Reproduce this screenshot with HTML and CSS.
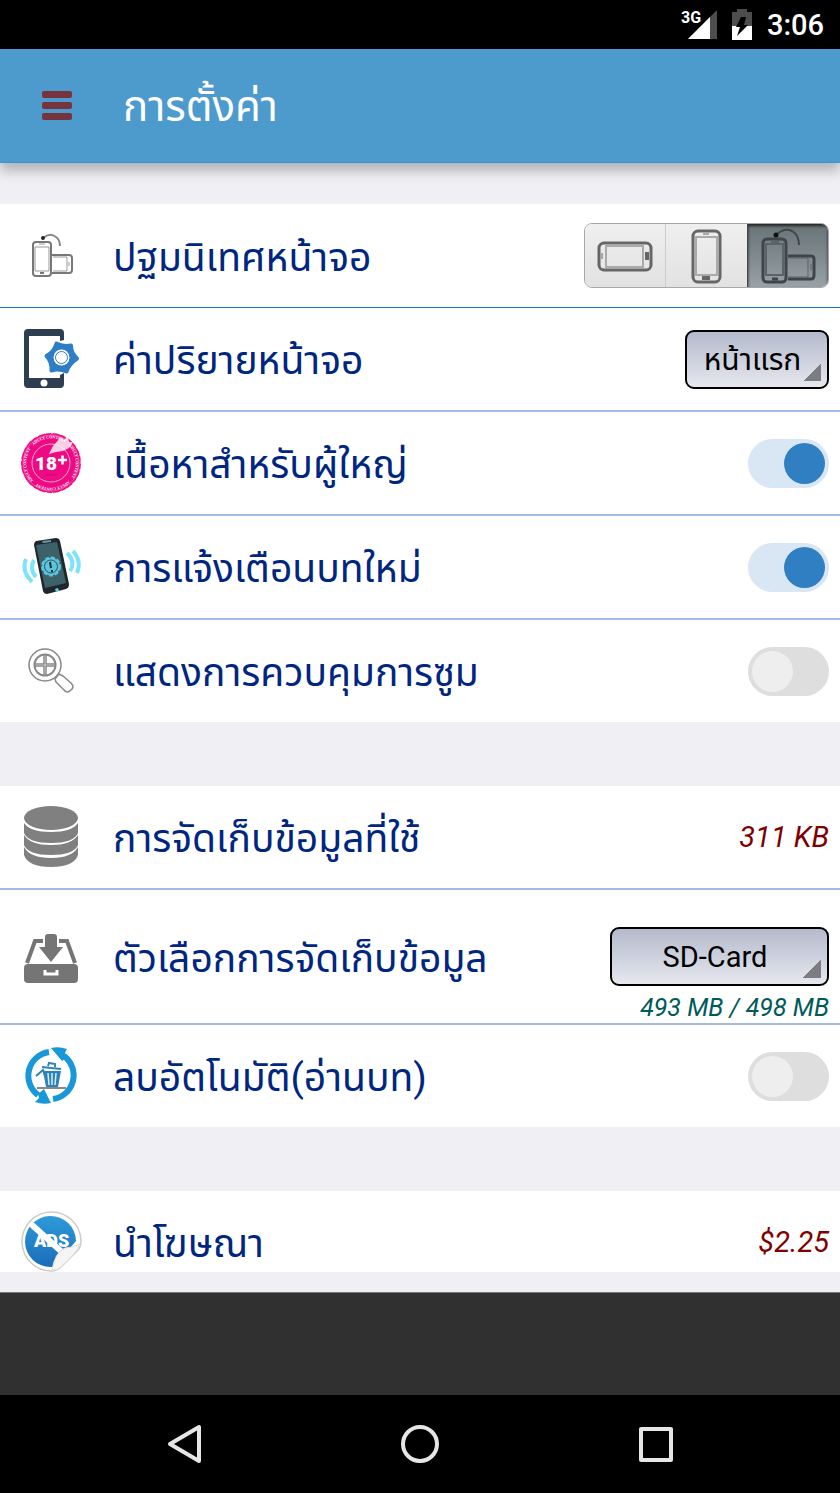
FILE: index.html
```html
<!DOCTYPE html>
<html lang="th">
<head>
    <meta charset="UTF-8">
    <meta name="viewport" content="width=device-width, initial-scale=1.0">
    <title>การตั้งค่า</title>
    <link rel="stylesheet" href="styles.css">
</head>
<body>
    <div class="status-bar">
        <svg class="signal" width="36" height="30" viewBox="0 0 36 30">
            <path d="M36 0v29H7z" fill="#4d4d4d"/>
            <path d="M29 7v22H7z" fill="#fff"/>
            <text x="0" y="13" class="network">3G</text>
        </svg>
        <svg width="20" height="31" viewBox="0 0 20 31">
            <path d="M5 0h10v3h5v14H0V3h5z" fill="#4d4d4d"/>
            <path d="M0 17h20v14H0z" fill="#fff"/>
            <path d="M9 8h5l-2 8h4L5 27l3-9H4z" fill="#000"/>
        </svg>
        <span class="time">3:06</span>
    </div>

    <header class="app-bar">
        <button class="menu" aria-label="เมนู"><span></span><span></span><span></span></button>
        <h1>การตั้งค่า</h1>
    </header>

    <main class="settings">
        <section class="group">
            <div class="row row-first">
                <svg class="icon" viewBox="0 0 62 62" fill="none" stroke="#777">
                    <rect x="13" y="17" width="18" height="34" rx="3" stroke-width="2"/>
                    <path d="M15 22h14v24H15zM19 19h6" stroke="#999"/>
                    <path d="M20 48h4" stroke-width="2"/>
                    <path d="M32 30h17q3 0 3 3v12q0 3-3 3H32" stroke-width="2"/>
                    <path d="M33 32h14v14H33M49 37v4" stroke="#999"/>
                    <path d="M23 13q7-6 13-1 4 3 4 9" stroke="#888" stroke-width="2"/>
                    <circle cx="23" cy="13" r="2" fill="#222" stroke="none"/>
                </svg>
                <span class="label">ปฐมนิเทศหน้าจอ</span>
                <div class="segmented" role="radiogroup" aria-label="ปฐมนิเทศหน้าจอ">
                    <label class="segment">
                        <input type="radio" name="orientation" aria-label="แนวนอน">
                        <svg viewBox="0 0 62 62" fill="none" stroke="#666">
                            <rect x="5" y="18" width="52" height="27" rx="5" stroke-width="3"/>
                            <path d="M12 20v23M49 20v23M12 21h37M12 42h37" stroke="#aaa" stroke-width="2"/>
                            <path d="M53 27v8" stroke-width="4"/>
                            <path d="M8 28v6"/>
                        </svg>
                    </label>
                    <label class="segment">
                        <input type="radio" name="orientation" aria-label="แนวตั้ง">
                        <svg viewBox="0 0 62 62" fill="none" stroke="#666">
                            <rect x="18" y="6" width="27" height="51" rx="5" stroke-width="3"/>
                            <path d="M20 12h23M20 50h23M21 12v38M42 12v38" stroke="#aaa" stroke-width="2"/>
                            <path d="M27 53h8" stroke-width="4"/>
                            <path d="M28 9h6"/>
                        </svg>
                    </label>
                    <label class="segment">
                        <input type="radio" name="orientation" aria-label="อัตโนมัติ" checked>
                        <svg viewBox="0 0 62 62" fill="none" stroke="#3f4548">
                            <rect x="6" y="14" width="23" height="43" rx="4" stroke-width="3"/>
                            <path d="M9 19h17v31H9zM14 17h8" stroke="#5b6367" stroke-width="2"/>
                            <path d="M15 54h6" stroke-width="3"/>
                            <path d="M31 31h23q3 0 3 3v16q0 4-3 4H31" stroke-width="3"/>
                            <path d="M31 33h20v19H31M54 39v6" stroke="#5b6367"/>
                            <path d="M19 10Q27 2 35 6q7 4 7 14" stroke-width="2"/>
                            <circle cx="19" cy="10" r="2.5" fill="#111" stroke="none"/>
                        </svg>
                    </label>
                </div>
            </div>

            <div class="row">
                <svg class="icon" viewBox="0 0 62 62">
                    <path d="M8 1h32q4 0 4 4v7l-4 1V8H9v42h31v-3l4-2v11q0 4-4 4H8q-4 0-4-4V5q0-4 4-4z" fill="#2c3e50"/>
                    <circle cx="24" cy="55" r="3.5" fill="#fff"/>
                    <path d="M36.500 15.500Q44 19 51 17.500 51 25 57 30.500 49 36 46.500 43.500 39 40 31.500 42.500 32 34 26.500 28 34 24 36.500 15.500z" fill="#2f7dc4" stroke="#2f7dc4" stroke-width="4" stroke-linejoin="round"/>
                    <circle cx="41.500" cy="29.500" r="8" fill="#fff"/>
                    <circle cx="41.500" cy="29.500" r="6" fill="none" stroke="#2f7dc4"/>
                </svg>
                <label class="label" for="default-page">ค่าปริยายหน้าจอ</label>
                <select class="picker" id="default-page">
                    <option>หน้าแรก</option>
                </select>
            </div>

            <div class="row">
                <svg class="icon" viewBox="0 0 62 62">
                    <circle cx="31" cy="31" r="30" fill="#ee0a83"/>
                    <circle cx="31" cy="31" r="30" fill="none" stroke="#fff" stroke-dasharray="1 5 2 7"/>
                    <circle cx="31" cy="31" r="28" fill="none" stroke="#f792c6" stroke-width="0.5"/>
                    <circle cx="31" cy="31" r="19" fill="none" stroke="#f9a8d2"/>
                    <path id="ring" d="M13.500 13.500A24.700 24.700 0 0 1 48.500 13.500" fill="none"/>
                    <g class="ring-text">
                        <text><textPath href="#ring">ADULT CONTENT</textPath></text>
                        <text transform="rotate(90 31 31)"><textPath href="#ring">ADULT CONTENT</textPath></text>
                        <text transform="rotate(180 31 31)"><textPath href="#ring">ADULT CONTENT</textPath></text>
                        <text transform="rotate(270 31 31)"><textPath href="#ring">ADULT CONTENT</textPath></text>
                    </g>
                    <path d="M29 22l4-8 8-9 3 3 4-4 1 6 4 0-4 6-6 3-7 1z" fill="#fff" opacity="0.8"/>
                    <text x="15" y="38" class="age">18</text>
                    <path d="M38 28h9M42.500 23.500v9" stroke="#fff" stroke-width="2.500"/>
                    <path d="M25 43h12" stroke="#c9076d"/>
                </svg>
                <label class="label" for="adult">เนื้อหาสำหรับผู้ใหญ่</label>
                <input class="switch" type="checkbox" id="adult" checked>
            </div>

            <div class="row">
                <svg class="icon" viewBox="0 0 62 62">
                    <path d="M16 5l20-3q3 0 4 3l9 43q0 4-3 5l-19 5q-3 0-4-3L14 9q0-3 2-4z" fill="#20272b"/>
                    <path d="M16 9l21-3 9 41-21 5z" fill="#3d6168"/>
                    <path d="M22 5l9-1v2l-8 1z" fill="#6a9aa6"/>
                    <path d="M35 53l3-1 1 3-3 1z" fill="#63cdec"/>
                    <circle cx="31" cy="30.500" r="9" fill="#5bc5df" stroke="#5bc5df" stroke-width="2" stroke-dasharray="4 2"/>
                    <circle cx="31" cy="30.500" r="6.500" fill="none" stroke="#31525a"/>
                    <path d="M30 26l1 6M32 34v2" stroke="#182f35" stroke-width="2"/>
                    <g fill="none" stroke="#7de4f7" stroke-width="4">
                        <path d="M6 23q-5 12 6 23M14 24q-5 9 2 17M47 17q9 9 3 18M53 15q9 10 4 22"/>
                    </g>
                </svg>
                <label class="label" for="notify">การแจ้งเตือนบทใหม่</label>
                <input class="switch" type="checkbox" id="notify" checked>
            </div>

            <div class="row">
                <svg class="icon" viewBox="0 0 62 62" fill="none" stroke="#888" stroke-width="1.500">
                    <circle cx="25" cy="25" r="16"/>
                    <circle cx="25" cy="25" r="10.500" stroke-width="2"/>
                    <path d="M24 15v9h-9M26 15v9h9M24 35v-9h-9M26 35v-9h9"/>
                    <path d="M35 39l4-5 4 2 8 7q4 4 0 7-4 4-7 0l-8-8z" fill="#fff" stroke-linejoin="round"/>
                </svg>
                <label class="label" for="zoom">แสดงการควบคุมการซูม</label>
                <input class="switch" type="checkbox" id="zoom">
            </div>
        </section>

        <section class="group">
            <div class="row">
                <svg class="icon" viewBox="0 0 62 62" fill="#808080">
                    <ellipse cx="31" cy="12" rx="27" ry="12"/>
                    <path d="M4 17q6 9 27 9t27-9v10q-4 10-27 10T4 27z"/>
                    <path d="M4 29q6 10 27 10t27-10v10q-4 10-27 10T4 39z"/>
                    <path d="M4 41q6 11 27 11t27-11v8q-4 12-27 12T4 49z"/>
                </svg>
                <span class="label">การจัดเก็บข้อมูลที่ใช้</span>
                <span class="value">311 KB</span>
            </div>

            <div class="row row-tall">
                <svg class="icon" viewBox="0 0 62 62" fill="#757575">
                    <rect x="4" y="38" width="54" height="19" rx="4"/>
                    <path d="M25 44v4h12v-4" fill="none" stroke="#fff" stroke-width="3"/>
                    <path d="M25 11q0-3 3-3h6q3 0 3 3v10h6L31 36 19 21h6z"/>
                    <path d="M7 37l8-22h8M55 37l-8-22h-8" fill="none" stroke="#757575" stroke-width="4"/>
                </svg>
                <label class="label" for="storage">ตัวเลือกการจัดเก็บข้อมูล</label>
                <div class="storage">
                    <select class="picker picker-wide" id="storage">
                        <option>SD-Card</option>
                    </select>
                    <span class="usage">493 MB / 498 MB</span>
                </div>
            </div>

            <div class="row">
                <svg class="icon" viewBox="0 0 62 62">
                    <g fill="none" stroke="#1898d8" stroke-width="6">
                        <path d="M29 7A24 24 0 0 0 18 50"/>
                        <path d="M44 11A24 24 0 0 1 33 54"/>
                    </g>
                    <path d="M31 3q8-2 16 1l-2 4 2 4-5 4zM15 57l4-4-1-4 6-5 7 14q-8 2-16-1z" fill="#1898d8"/>
                    <path d="M17 43h29" stroke="#888" stroke-width="2"/>
                    <path d="M23 26h18l-3 16H26z" fill="#2d83b8"/>
                    <path d="M28 28l1 12M32 28v12M36 28l-1 12" stroke="#d9eefa" stroke-width="1.500"/>
                    <path d="M22 22l19 2M28 21l1-3 6 1v3M16 31l7-6 2 6" fill="none" stroke="#2d83b8" stroke-width="2"/>
                </svg>
                <label class="label" for="auto-delete">ลบอัตโนมัติ(อ่านบท)</label>
                <input class="switch" type="checkbox" id="auto-delete">
            </div>
        </section>

        <section class="group">
            <div class="row row-last">
                <svg class="icon" viewBox="0 0 62 62">
                    <defs>
                        <linearGradient id="sticker" x2="0" y2="1">
                            <stop stop-color="#2e9bd8"/>
                            <stop offset="1" stop-color="#1a6cba"/>
                        </linearGradient>
                    </defs>
                    <path d="M32 60A29.500 29.500 0 1 1 61 30q0 5-2 8L40 57q-4 3-8 3z" fill="#fff" stroke="#ccc" stroke-width="1.500"/>
                    <path d="M31 56A25.500 25.500 0 1 1 56 30L34 56z" fill="url(#sticker)"/>
                    <text x="14" y="36" class="ads">ADS</text>
                    <path d="M11 13l32 29" stroke="#fff" stroke-width="6"/>
                    <path d="M32 59q3-18 13-22 6 0 15-4-2 6-8 12L41 56q-4 4-9 3z" fill="#f5f5f5" stroke="#ddd"/>
                </svg>
                <span class="label">นำโฆษณา</span>
                <span class="value">$2.25</span>
            </div>
        </section>
    </main>

    <div class="ad-space"></div>

    <nav class="nav-bar">
        <button aria-label="กลับ">
            <svg viewBox="0 0 44 44"><path d="M37 5v34L8 22z"/></svg>
        </button>
        <button aria-label="หน้าหลัก">
            <svg viewBox="0 0 44 44"><circle cx="22" cy="22" r="17"/></svg>
        </button>
        <button aria-label="ล่าสุด">
            <svg viewBox="0 0 44 44"><rect x="7" y="7" width="30" height="31"/></svg>
        </button>
    </nav>
</body>
</html>
```
FILE: styles.css
```css
* {
    box-sizing: border-box;
}

body {
    font-family: Roboto, "Noto Sans Thai", "Noto Sans", sans-serif;
    display: flex;
    flex-direction: column;
    min-height: 100vh;
    margin: 0;
    background-color: #000;
}

button {
    border: none;
    background: none;
    padding: 0;
    cursor: pointer;
}

/* top bars */
.status-bar {
    display: flex;
    justify-content: flex-end;
    align-items: center;
    gap: 15px;
    height: 49px;
    padding: 0 16px;
    background-color: #000;
    color: #fff;
}

.network {
    font-size: 16px;
    font-weight: bold;
    fill: #fff;
}

.signal {
    overflow: visible;
}

.time {
    font-size: 29px;
    font-weight: 500;
}

.app-bar {
    display: flex;
    align-items: center;
    gap: 51px;
    height: 114px;
    padding: 0 42px;
    background-color: #4d9acd;
    border-bottom: 1px solid #2f96d3;
    box-shadow: 0 8px 12px rgba(0, 0, 0, 0.25);
    z-index: 1;
}

.menu {
    display: flex;
    flex-direction: column;
    gap: 4px;
    width: 30px;
}

.menu span {
    height: 7px;
    border-radius: 2px;
    background-color: #76343f;
}

.app-bar h1 {
    margin: 0;
    padding-top: 4px;
    font-size: 42px;
    font-weight: normal;
    color: #fff;
}

/* settings list */
.settings {
    display: flex;
    flex-direction: column;
    gap: 64px;
    padding: 41px 0 20px;
    background-color: #efeff4;
}

.group {
    background-color: #fff;
}

.row {
    display: flex;
    align-items: center;
    height: 104px;
    padding: 0 11px 0 20px;
    border-bottom: 2px solid #a3bde0;
}

.row-first {
    height: 104px;
    border-bottom: 1px solid #1a72b0;
}

.row:last-child {
    border-bottom: none;
    height: 102px;
}

.row-tall {
    height: 135px;
}

.row.row-last {
    height: 81px;
    padding-top: 20px;
}

.icon {
    flex: none;
    width: 62px;
    height: 62px;
    margin-right: 31px;
}

.label {
    flex: 1;
    padding-top: 4px;
    font-size: 39px;
    line-height: 48px;
    color: #00267f;
}

.value {
    font-size: 29px;
    font-style: italic;
    color: #7f0000;
}

.age {
    font-size: 19px;
    font-weight: 900;
    fill: #fff;
}

.ring-text {
    font-family: "Liberation Serif", serif;
    font-size: 4px;
    font-weight: bold;
    fill: #fff;
}

.ads {
    font-size: 18px;
    font-weight: 900;
    fill: #fff;
}

/* orientation buttons */
.segmented {
    display: flex;
    width: 245px;
    height: 65px;
    border: 1px solid #a8a8a8;
    border-radius: 8px;
    overflow: hidden;
}

.segment {
    position: relative;
    flex: 1;
    display: flex;
    justify-content: center;
    align-items: center;
    background: linear-gradient(#efefef, #e2e2e2);
    cursor: pointer;
}

.segment + .segment {
    border-left: 1px solid #ccc;
}

.segment input {
    position: absolute;
    opacity: 0;
}

.segment svg {
    width: 62px;
    height: 62px;
}

.segment:has(input:checked) {
    background: linear-gradient(#687378, #838d92 60%, #98a2a7);
    border-left-color: #42484b;
    box-shadow: inset 0 2px 3px #222;
}

/* drop-downs */
.picker {
    appearance: none;
    width: 144px;
    height: 59px;
    padding: 0 9px 0 0;
    border: 2px solid #000;
    border-radius: 9px;
    background:
        linear-gradient(135deg, transparent 50%, #7b7d80 50%) right 6px bottom 6px / 18px 18px no-repeat,
        linear-gradient(#b4bacd, #e6e8ee);
    color: #000;
    font-family: inherit;
    font-size: 30px;
    text-align: center;
    text-align-last: center;
}

.picker-wide {
    width: 219px;
    font-size: 29px;
}

.storage {
    display: flex;
    flex-direction: column;
    align-items: flex-end;
    align-self: flex-end;
    gap: 7px;
}

.usage {
    font-size: 25px;
    line-height: 30px;
    font-style: italic;
    color: #005a5a;
}

/* switches */
.switch {
    appearance: none;
    display: flex;
    width: 81px;
    height: 49px;
    margin: 0;
    padding: 4px;
    border-radius: 25px;
    background-color: #dedede;
    cursor: pointer;
}

.switch::before {
    content: "";
    width: 41px;
    height: 41px;
    border-radius: 50%;
    background-color: #eee;
}

.switch:checked {
    justify-content: flex-end;
    background-color: #d9e7f4;
}

.switch:checked::before {
    background-color: #317fc3;
}

/* bottom */
.ad-space {
    flex: 1;
    min-height: 100px;
    border-top: 1px solid #777;
    background-color: #303030;
}

.nav-bar {
    display: flex;
    justify-content: center;
    align-items: center;
    gap: 192px;
    height: 98px;
    background-color: #000;
}

.nav-bar button {
    width: 44px;
    height: 44px;
}

.nav-bar svg {
    fill: none;
    stroke: #e6e6e6;
    stroke-width: 4;
    stroke-linejoin: round;
}
```
